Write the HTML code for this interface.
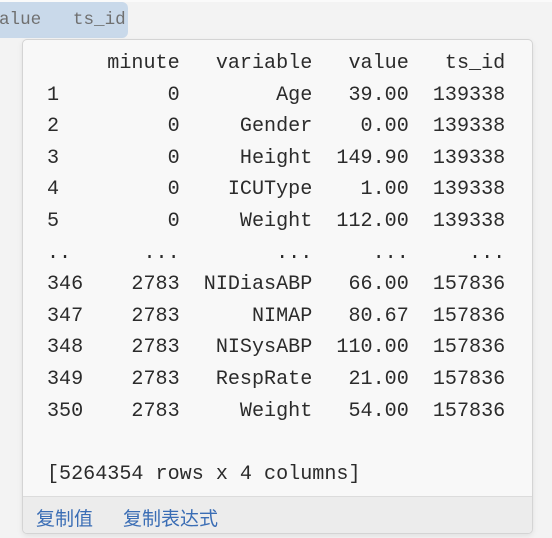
<!DOCTYPE html>
<html><head><meta charset="utf-8"><style>
html,body{margin:0;padding:0}
body{width:552px;height:538px;background:#f3f3f3;position:relative;overflow:hidden;font-family:"Liberation Mono","DejaVu Sans Mono",monospace}
.top{position:absolute;left:0;top:0;width:552px;height:2px;background:#fafafa}
.hl{position:absolute;left:0;top:2px;width:128px;height:36px;background:#c9d9ea;border-radius:0 6px 6px 0}
.hl span{position:absolute;left:-1px;top:8px;font-size:17.6px;color:#707070;white-space:pre}
.pop{position:absolute;left:22px;top:39px;width:509px;height:493px;background:#f8f8f8;border:1px solid #d4d4d4;border-radius:5px;box-shadow:0 2px 6px rgba(0,0,0,.08);overflow:hidden}
pre{position:absolute;left:24px;top:8px;margin:0;font-family:"Liberation Mono","DejaVu Sans Mono",monospace;font-size:20.1px;line-height:31.6px;color:#2b2b2b}
.foot{position:absolute;left:0;top:456px;width:509px;height:37px;background:#ececec;border-top:1px solid #dcdcdc;font-family:"Liberation Sans","Noto Sans CJK SC",sans-serif;font-size:19px;color:#3a6db5}
.foot span{position:absolute;top:7px}
</style></head><body>
<div class="top"></div>
<div class="hl"><span>alue   ts_id</span></div>
<div class="pop">
<pre>     minute   variable   value   ts_id
1         0        Age   39.00  139338
2         0     Gender    0.00  139338
3         0     Height  149.90  139338
4         0    ICUType    1.00  139338
5         0     Weight  112.00  139338
..      ...        ...     ...     ...
346    2783  NIDiasABP   66.00  157836
347    2783      NIMAP   80.67  157836
348    2783   NISysABP  110.00  157836
349    2783   RespRate   21.00  157836
350    2783     Weight   54.00  157836

[5264354 rows x 4 columns]</pre>
<div class="foot"><span style="left:13px">复制值</span><span style="left:100px">复制表达式</span></div>
</div>
</body></html>
